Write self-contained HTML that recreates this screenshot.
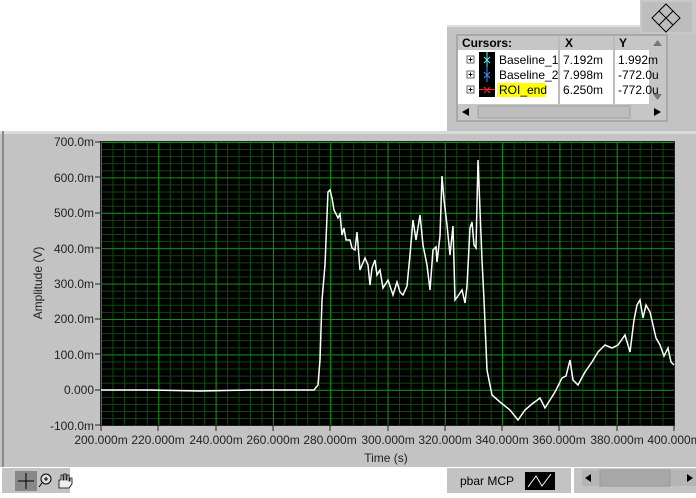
<!DOCTYPE html>
<html><head><meta charset="utf-8"><style>
body{margin:0;width:696px;height:493px;overflow:hidden;background:#fff;font-family:"Liberation Sans",sans-serif;}
</style></head><body>
<svg width="696" height="493" xmlns="http://www.w3.org/2000/svg" font-family="Liberation Sans, sans-serif">
<defs>
<pattern id="minor" x="101" y="142" width="11.46" height="7.08" patternUnits="userSpaceOnUse">
<path d="M0.5 0V7.08M0 0.5H11.46" stroke="#0f4a0f" stroke-width="1"/></pattern>
<pattern id="major" x="101" y="142" width="57.3" height="35.4" patternUnits="userSpaceOnUse">
<path d="M0.5 0V35.4M0 0.5H57.3" stroke="#119011" stroke-width="1"/></pattern>
</defs>
<rect x="0" y="131" width="696" height="336" fill="#c3c3c3"/>
<rect x="0" y="131" width="696" height="3" fill="#dadada"/>
<rect x="2" y="131" width="2" height="336" fill="#8a8a8a"/>
<rect x="447" y="25" width="249" height="106" fill="#c3c3c3"/>
<rect x="447" y="25" width="249" height="2" fill="#dedede"/>
<rect x="640" y="0" width="56" height="34" fill="#c8c8c8"/>
<rect x="642" y="2" width="50" height="30" fill="#bdbdbd"/>
<path d="M666 4L680 18L666 32L652 18Z M659 11L673 25 M673 11L659 25" fill="none" stroke="#000"/>
<rect x="456" y="34" width="212" height="88" fill="#a8a8a8"/>
<rect x="458" y="36" width="208" height="84" fill="#fff"/>
<rect x="458" y="36" width="191" height="14" fill="#c6c6c6"/>
<rect x="558" y="36" width="2" height="68" fill="#bbb"/>
<rect x="613" y="36" width="2" height="68" fill="#bbb"/>
<text x="462" y="47" font-size="12" font-weight="bold">Cursors:</text>
<text x="565" y="47" font-size="12" font-weight="bold">X</text>
<text x="619" y="47" font-size="12" font-weight="bold">Y</text>
<rect x="649" y="36" width="17" height="68" fill="#c6c6c6"/>
<path d="M653 46h9l-4.5-6z M653 94h9l-4.5 6z" fill="#777"/>
<rect x="458" y="104" width="208" height="16" fill="#c6c6c6"/>
<rect x="478" y="106" width="152" height="12" fill="#bdbdbd" stroke="#a0a0a0"/>
<path d="M462 112l7-4v8z M661 112l-7-4v8z" fill="#000"/>
<g font-size="12" fill="#000">
<g fill="none" stroke="#666"><rect x="467" y="56" width="7" height="7"/><rect x="467" y="71" width="7" height="7"/><rect x="467" y="86" width="7" height="7"/></g>
<path d="M468.5 59.5h4M470.5 57.5v4M468.5 74.5h4M470.5 72.5v4M468.5 89.5h4M470.5 87.5v4" stroke="#000"/>
<rect x="479" y="52" width="16" height="15" fill="#000"/><rect x="479" y="67" width="16" height="15" fill="#000"/><rect x="479" y="82" width="16" height="15" fill="#000"/>
<path d="M487 52v15M484 57l6 6M490 57l-6 6" stroke="#6ee" stroke-width="1"/>
<path d="M487 67v15M484 72l6 6M490 72l-6 6" stroke="#48f" stroke-width="1"/>
<path d="M479 89.5h16M484 87l6 6M490 87l-6 6" stroke="#f22" stroke-width="1"/>
<rect x="497" y="83" width="48" height="14" fill="#ff0"/>
<text x="499" y="64">Baseline_1</text><text x="563" y="64">7.192m</text><text x="618" y="64">1.992m</text>
<text x="499" y="79">Baseline_2</text><text x="563" y="79">7.998m</text><text x="618" y="79">-772.0u</text>
<text x="499" y="94">ROI_end</text><text x="563" y="94">6.250m</text><text x="618" y="94">-772.0u</text>
</g>
<rect x="101" y="142" width="573" height="283" fill="#000"/>
<rect x="101" y="142" width="573" height="283" fill="url(#minor)"/>
<rect x="101" y="142" width="573" height="283" fill="url(#major)"/>
<rect x="100.5" y="141.5" width="574" height="284" fill="none" stroke="#222"/>
<polyline fill="none" stroke="#fff" stroke-width="1.5" points="101,390 150,390 200,391 250,390 300,390 314,390 318,385 320,360 322,300 325,265 328,192 330,190 332,198 334,210 338,218 340,214 342,235 344,228 346,240 350,240 352,248 355,250 357,232 360,270 362,265 365,258 368,265 370,285 372,268 375,260 377,275 380,270 383,288 388,280 393,295 397,282 400,292 403,295 407,286 410,255 413,220 416,240 420,215 423,245 427,265 430,290 433,250 436,247 437,262 440,236 442,176 444,200 447,225 450,255 453,226 455,300 458,296 462,290 465,303 467,286 470,228 472,222 474,245 476,248 478,160 480,210 482,260 484,300 487,370 492,395 500,402 510,410 518,420 525,410 532,404 540,398 545,408 555,392 562,378 566,376 570,360 573,380 578,385 585,372 592,362 598,352 605,345 612,348 618,345 625,335 630,352 634,320 637,305 640,300 643,318 646,305 650,312 653,325 656,338 660,345 664,356 668,348 671,362 674,365"/>
<g font-size="12" fill="#222" text-anchor="end">
<text x="94" y="146">700.0m</text><text x="94" y="182">600.0m</text><text x="94" y="217">500.0m</text><text x="94" y="253">400.0m</text><text x="94" y="288">300.0m</text><text x="94" y="323">200.0m</text><text x="94" y="359">100.0m</text><text x="94" y="394">0.000</text><text x="94" y="430">-100.0m</text>
</g>
<g stroke="#222"><path d="M95 142h5M95 177h5M95 213h5M95 248h5M95 284h5M95 319h5M95 354h5M95 390h5M95 425h5"/>
<path d="M101 426v5M158 426v5M216 426v5M273 426v5M330 426v5M388 426v5M445 426v5M502 426v5M559 426v5M617 426v5M674 426v5"/></g>
<g font-size="12" fill="#222" text-anchor="middle">
<text x="101" y="444">200.000m</text><text x="158" y="444">220.000m</text><text x="216" y="444">240.000m</text><text x="273" y="444">260.000m</text><text x="330" y="444">280.000m</text><text x="388" y="444">300.000m</text><text x="445" y="444">320.000m</text><text x="502" y="444">340.000m</text><text x="559" y="444">360.000m</text><text x="617" y="444">380.000m</text><text x="674" y="444">400.000m</text>
<text x="386" y="462">Time (s)</text>
<text transform="translate(42,283) rotate(-90)">Amplitude (V)</text>
</g>
<rect x="0" y="467" width="696" height="26" fill="#fff"/>
<rect x="2" y="468" width="68" height="25" fill="#c3c3c3"/>
<rect x="15" y="471" width="22" height="20" fill="#888"/>
<path d="M26 473v16M18 481h16" stroke="#000"/>
<circle cx="46" cy="479" r="5" fill="#ddd" stroke="#000"/>
<path d="M44 479h4M46 477v4M42 483l-3 4" stroke="#000"/>
<path d="M59 488v-8h2v-5h2v5h1v-6h2v6h1v-5h2v6h1v-3h2v6l-3 4h-8z" fill="#eee" stroke="#000" stroke-width="0.8"/>
<rect x="447" y="468" width="124" height="25" fill="#c3c3c3"/>
<text x="460" y="485" font-size="12">pbar MCP</text>
<rect x="525" y="472" width="30" height="18" fill="#000"/>
<path d="M528 487l8-11l6 10l9-12" fill="none" stroke="#fff"/>
<rect x="574" y="468" width="122" height="25" fill="#c3c3c3"/>
<rect x="582" y="470" width="114" height="16" fill="#b5b5b5"/>
<rect x="600" y="470" width="70" height="16" fill="#a8a8a8" stroke="#999"/>
<path d="M585 478l6-4v8z M693 478l-6-4v8z" fill="#000"/>
</svg>
</body></html>
